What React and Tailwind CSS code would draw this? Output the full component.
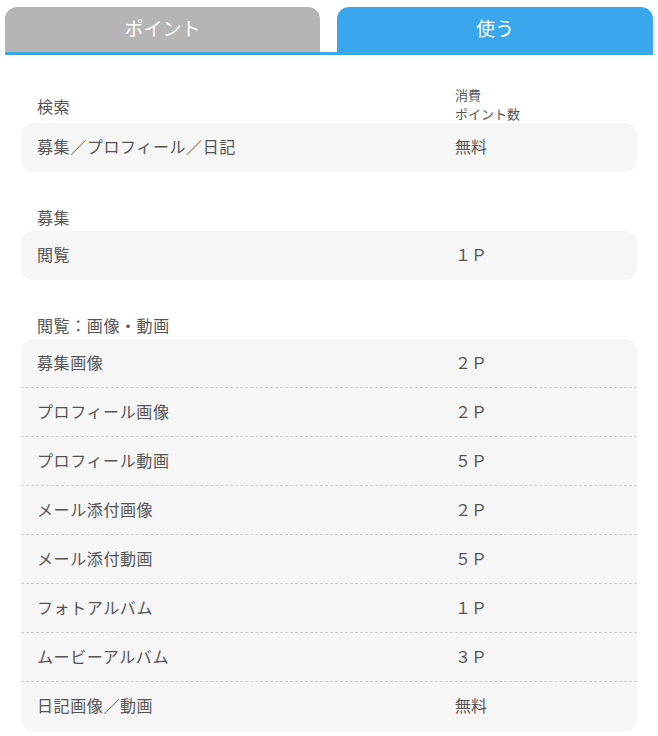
import React from "react";

function Row({ label, value, last }) {
  return (
    <div
      className={`grid grid-cols-[418px_1fr] items-center h-[49px] px-4 pb-[3px] ${
        last ? "" : "border-b border-dashed border-[#cfcfcf]"
      }`}
    >
      <span className="text-[16px] tracking-[0.6px] text-[#555]">{label}</span>
      <span className="text-[16px] text-[#555]">{value}</span>
    </div>
  );
}

function Box({ rows }) {
  return (
    <div className="bg-[#f6f6f6] rounded-[12px] overflow-hidden">
      {rows.map((r, i) => (
        <Row key={i} label={r[0]} value={r[1]} last={i === rows.length - 1} />
      ))}
    </div>
  );
}

export default function App() {
  return (
    <div className="bg-white w-[658px] min-h-[736px] px-[5px] pt-[7px]" style={{ fontFamily: '"Noto Sans CJK JP", "Noto Sans", sans-serif' }}>
      <div className="grid grid-cols-[315px_316px] gap-[17px] border-b-[3px] border-[#3aa6ec]">
        <div className="h-[45px] rounded-t-[12px] bg-[#b5b5b5] flex items-center justify-center text-white text-[19px] pb-[3px]">
          ポイント
        </div>
        <div className="h-[45px] rounded-t-[12px] bg-[#3aa6ec] flex items-center justify-center text-white text-[19px] pb-[3px]">
          使う
        </div>
      </div>

      <div className="px-4 pt-[30px]">
        <div className="grid grid-cols-[418px_1fr] items-center h-[38px] px-4 pb-[2px]">
          <span className="text-[16px] tracking-[0.6px] text-[#555]">検索</span>
          <span className="text-[13px] leading-[19px] text-[#555] pb-[3px]">
            消費
            <br />
            ポイント数
          </span>
        </div>
        <Box rows={[["募集／プロフィール／日記", "無料"]]} />

        <div className="mt-[31px] h-[28px] flex items-center px-4 text-[16px] tracking-[0.6px] text-[#555]">募集</div>
        <Box rows={[["閲覧", "１Ｐ"]]} />

        <div className="mt-[31px] h-[28px] flex items-center px-4 text-[16px] tracking-[0.6px] text-[#555]">閲覧：画像・動画</div>
        <Box
          rows={[
            ["募集画像", "２Ｐ"],
            ["プロフィール画像", "２Ｐ"],
            ["プロフィール動画", "５Ｐ"],
            ["メール添付画像", "２Ｐ"],
            ["メール添付動画", "５Ｐ"],
            ["フォトアルバム", "１Ｐ"],
            ["ムービーアルバム", "３Ｐ"],
            ["日記画像／動画", "無料"],
          ]}
        />
      </div>
    </div>
  );
}
